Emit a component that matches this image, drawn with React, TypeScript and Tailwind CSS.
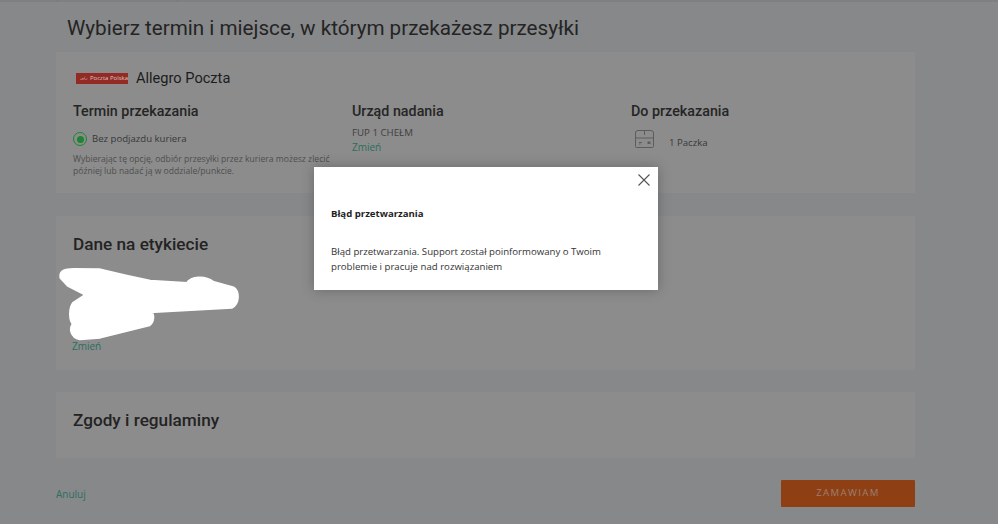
export default function App() {
  const roboto = "font-['Roboto',sans-serif]";
  return (
    <div className="relative h-[524px] w-[998px] overflow-hidden bg-[#87888a] font-['Open_Sans',sans-serif]">
      <div className="flex h-[2px] bg-[#7f8082] pl-[57px]">
        <div className="w-[121px] border-x border-[#77787a]" />
      </div>
      <main className="ml-[56px] flex w-[859px] flex-col">
        <h1 className={`${roboto} ml-[11px] mt-[11px] h-[39px] text-[20.650px] leading-[30px] text-[#242424]`}>
          Wybierz termin i miejsce, w którym przekażesz przesyłki
        </h1>
        <section className="h-[141px] bg-[#8c8c8c] pl-[17px] pt-[15px]">
          <div className="flex items-center">
            <div className="ml-[3px] flex h-[11px] w-[52px] items-center gap-[2px] bg-[#942a24] pl-[4px]">
              <svg viewBox="0 0 16 8" className="h-[7px] w-[13px]" fill="none" stroke="#d8c8c4" strokeWidth="1">
                <path d="M0 5.5h6c2 0 3-1 3.5-3M4 3.5c1 1 2 1 3 0M9 5c2 1.500 4 1 6-.5M9 1.500l1.500-1" />
              </svg>
              <span className="text-[6px] leading-none whitespace-nowrap text-[#d8c8c4]">Poczta Polska</span>
            </div>
            <span className={`${roboto} ml-[8px] text-[14.600px] leading-[22px] text-[#1c1c1c]`}>Allegro Poczta</span>
          </div>
          <div className="mt-[12px] grid grid-cols-[279px_279px_1fr]">
            <div>
              <h2 className={`${roboto} text-[14.300px] leading-[20px] font-medium text-[#252525]`}>Termin przekazania</h2>
              <div className="mt-[11px] flex items-center gap-[5px]">
                <span className="flex h-[14px] w-[14px] items-center justify-center rounded-full border-[1.500px] border-[#1b8530]">
                  <span className="h-[7px] w-[7px] rounded-full bg-[#1b8530]" />
                </span>
                <span className="text-[9.600px] leading-[14px] text-[#383838]">Bez podjazdu kuriera</span>
              </div>
              <p className="mt-[8px] w-[265px] text-[8.600px] leading-[11.500px] text-[#4e4e4e]">
                Wybierając tę opcję, odbiór przesyłki przez kuriera możesz zlecić później lub nadać ją w oddziale/punkcie.
              </p>
            </div>
            <div>
              <h2 className={`${roboto} text-[14.300px] leading-[20px] font-medium text-[#252525]`}>Urząd nadania</h2>
              <p className="mt-[5px] text-[9.700px] leading-[14px] text-[#404040]">FUP 1 CHEŁM</p>
              <a className="block text-[10px] leading-[14px] text-[#2a6e5e]">Zmień</a>
            </div>
            <div>
              <h2 className={`${roboto} text-[14.300px] leading-[20px] font-medium text-[#252525]`}>Do przekazania</h2>
              <div className="mt-[9px] ml-[4px] flex items-start gap-[15px]">
                <svg viewBox="0 0 19 18" className="h-[18px] w-[19px]" fill="none" stroke="#5c5c5c" strokeWidth="1">
                  <path d="M.5 8V3A2.500 2.500 0 0 1 3 .5h13A2.500 2.500 0 0 1 18.500 3v13.500a1 1 0 0 1-1 1h-16a1 1 0 0 1-1-1V8h18M9.500 .5V5" />
                  <path d="M4 12.500h3M4 14h1.500" />
                  <rect x="12.500" y="11.500" width="3" height="2.500" fill="#5c5c5c" stroke="none" />
                </svg>
                <span className="mt-[6px] text-[9.600px] leading-[14px] text-[#383838]">1 Paczka</span>
              </div>
            </div>
          </div>
        </section>
        <section className="mt-[23px] flex h-[154px] flex-col bg-[#8c8c8c] pl-[17px] pt-[16px]">
          <h2 className={`${roboto} text-[17.200px] leading-[24px] font-medium text-[#232323]`}>Dane na etykiecie</h2>
          <a className="mt-auto mb-[17px] -ml-px text-[10px] leading-[14px] text-[#2a6e5e]">Zmień</a>
        </section>
        <section className="mt-[22px] h-[66px] bg-[#8c8c8c] pl-[17px] pt-[16px]">
          <h2 className={`${roboto} text-[17.200px] leading-[24px] font-medium text-[#232323]`}>Zgody i regulaminy</h2>
        </section>
        <div className="mt-[22px] flex items-center justify-between">
          <a className="text-[10px] leading-[14px] text-[#2f6e60]">Anuluj</a>
          <button className="flex h-[27px] w-[134px] items-center justify-center rounded-[1px] bg-[#8f3f14] text-[9.600px] tracking-[1.400px] text-[#9c8070]">
            ZAMAWIAM
          </button>
        </div>
      </main>

      <svg className="absolute top-[220px] left-[50px]" width="260" height="150" viewBox="0 0 780 450" fill="#fff" stroke="#fff" strokeWidth="12" strokeLinejoin="round">
        <path d="M34 172 C32 155 45 150 70 150 L150 151 L230 170 L300 185 L412 192 C425 172 465 170 488 188 L550 205 C565 215 565 250 545 260 L300 274 C310 285 310 305 295 314 L150 350 L90 355 C65 350 60 325 72 312 C60 300 60 265 72 250 L112 224 L55 195 Z" />
      </svg>

      <div role="dialog" className="absolute top-[167px] left-[314px] h-[123px] w-[344px] bg-white pl-[17px] shadow-[0_0_12px_rgba(0,0,0,0.25)]">
        <button className="absolute top-[7px] right-[8px] text-[#555]">
          <svg viewBox="0 0 12 12" className="h-[12px] w-[12px]" fill="none" stroke="currentColor" strokeWidth="1.100">
            <path d="M.5 .5l11 11M11.500 .5l-11 11" />
          </svg>
        </button>
        <h3 className="mt-[40px] text-[9.600px] leading-[14px] font-bold text-[#1f1f1f]">Błąd przetwarzania</h3>
        <p className="mt-[24px] w-[285px] text-[9.650px] leading-[14.500px] text-[#333]">
          Błąd przetwarzania. Support został poinformowany o Twoim problemie i pracuje nad rozwiązaniem
        </p>
      </div>
    </div>
  );
}
